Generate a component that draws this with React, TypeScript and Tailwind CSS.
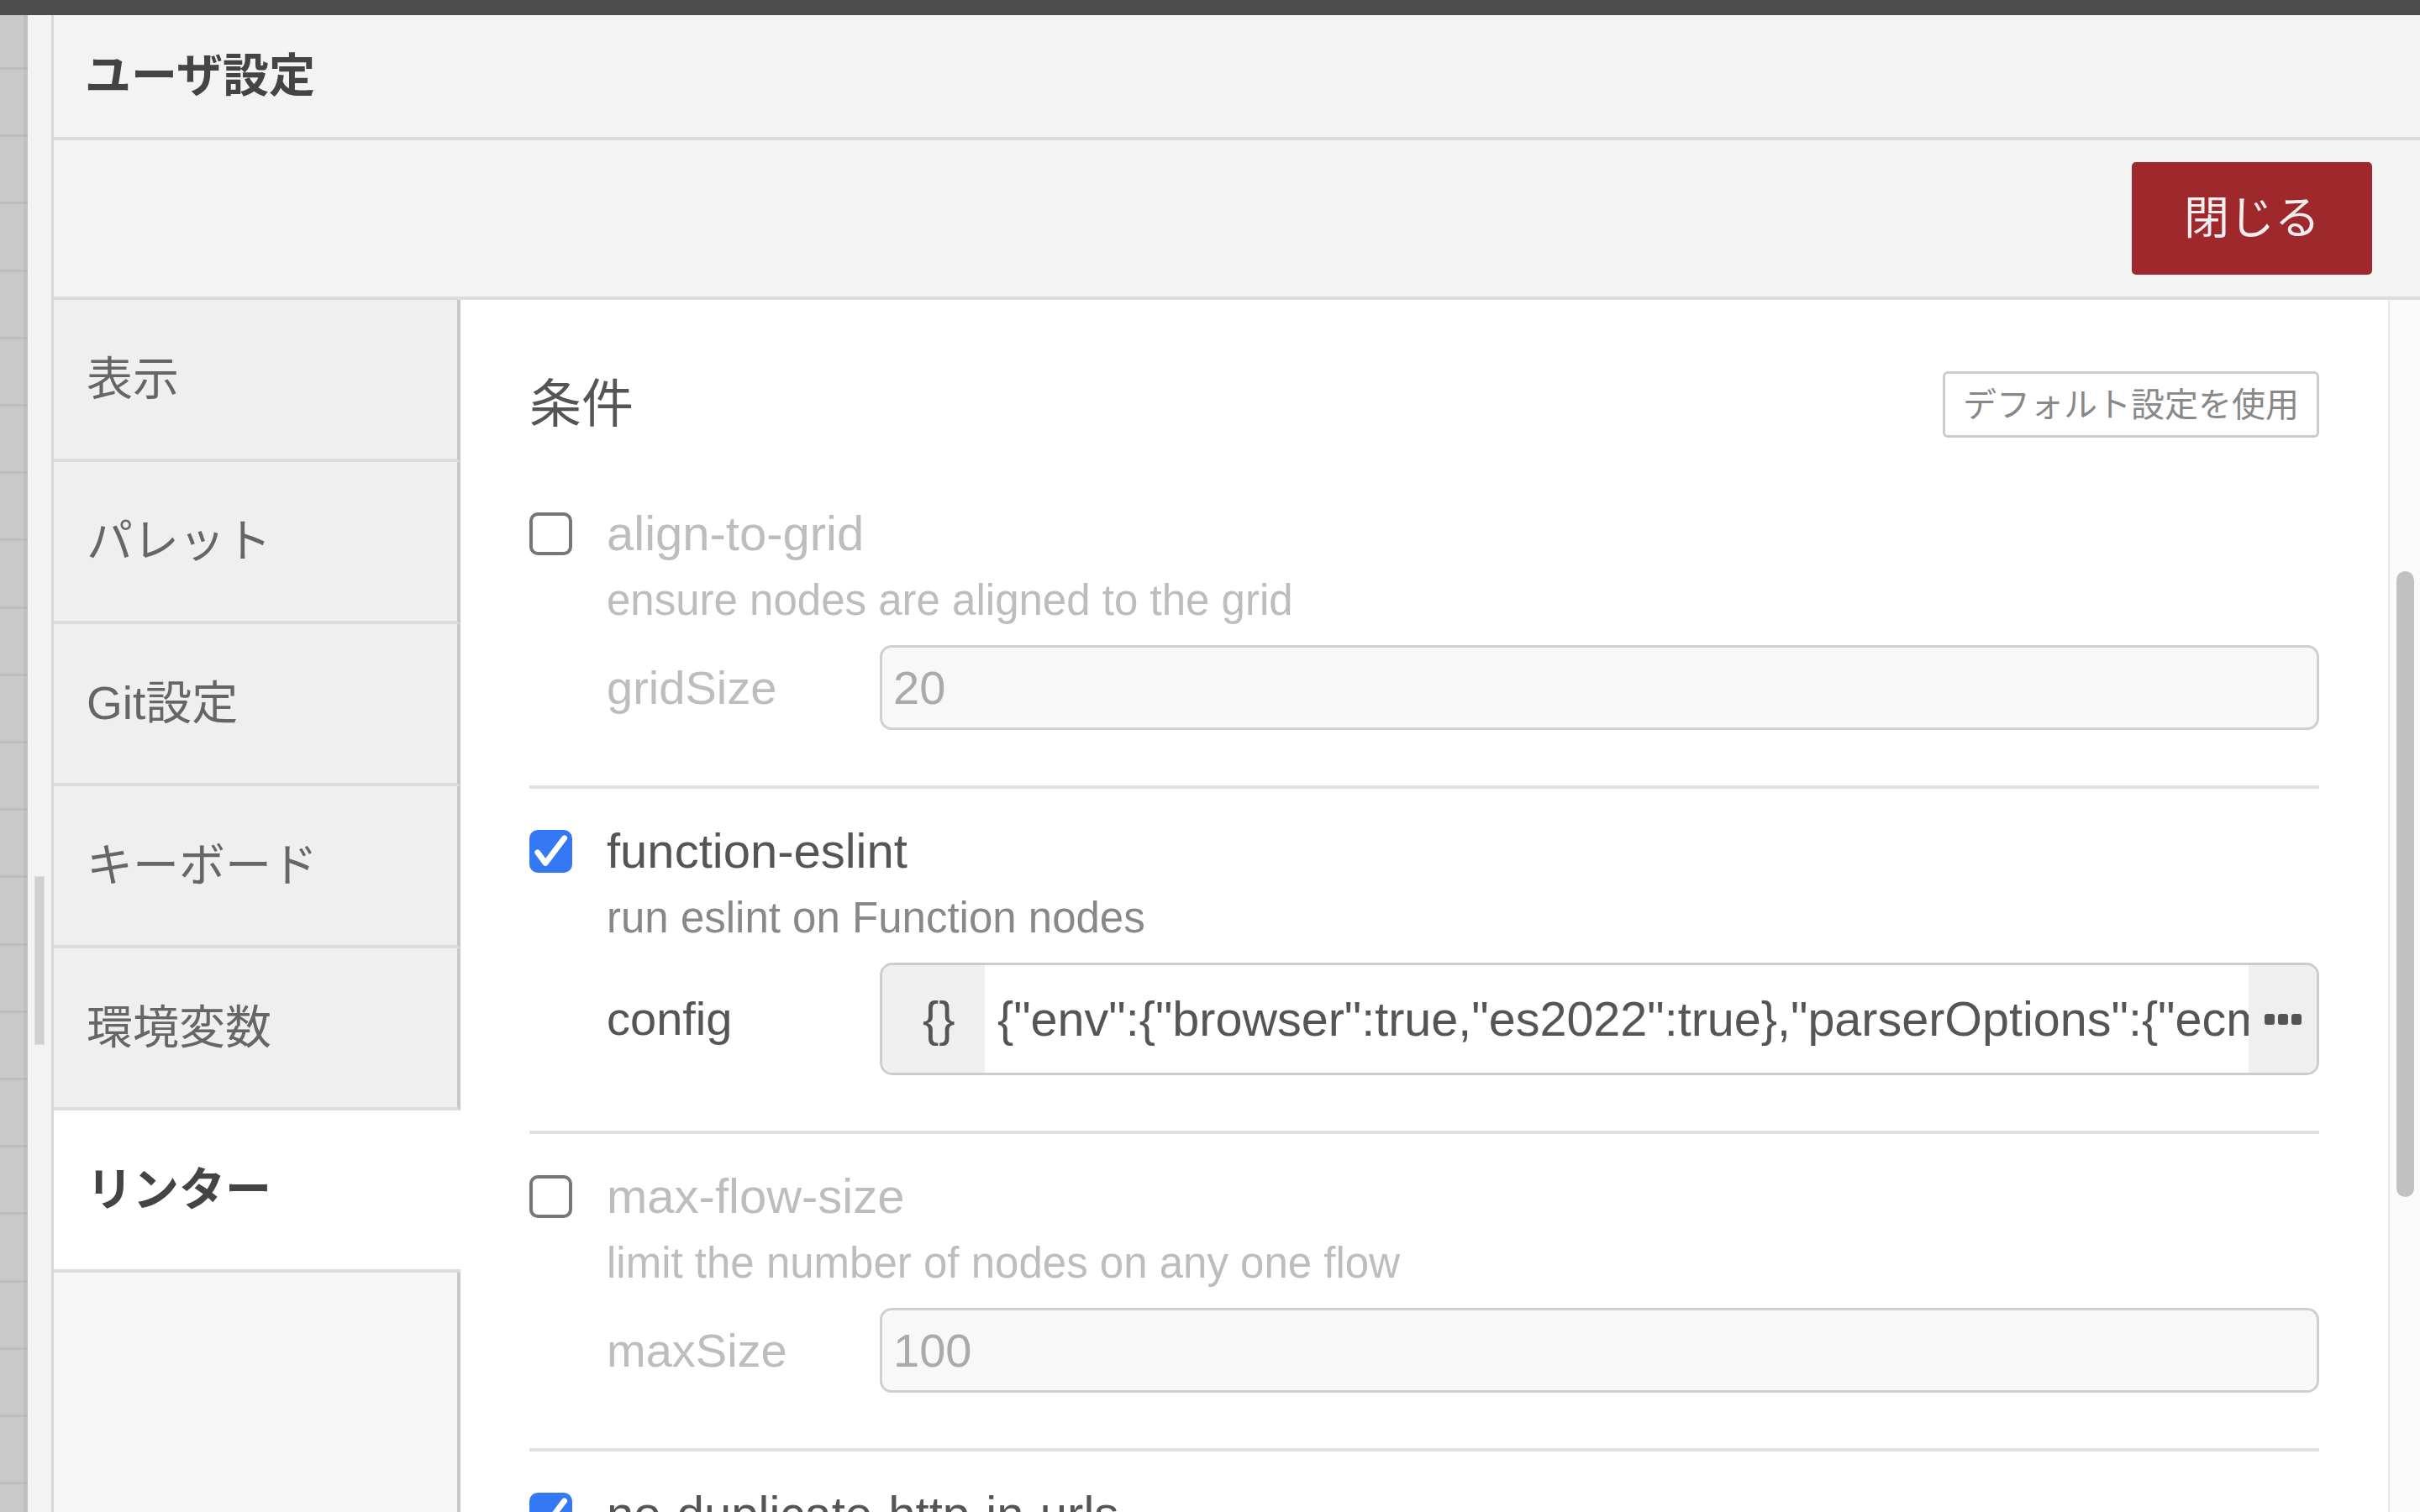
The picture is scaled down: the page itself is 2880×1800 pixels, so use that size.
import React from "react";

function Checkbox({ checked }: { checked: boolean }) {
  if (checked) {
    return (
      <div className="w-[51px] h-[51px] rounded-[10px] bg-[#3478f6] shrink-0 flex items-center justify-center">
        <svg width="51" height="51" viewBox="0 0 24 24">
          <path d="M4.6 12.6 L9 18.6 L19.6 4.6" stroke="#ffffff" strokeWidth="3.2" fill="none" strokeLinecap="round" strokeLinejoin="round" />
        </svg>
      </div>
    );
  }
  return <div className="w-[51px] h-[51px] rounded-[10px] border-[4px] border-[#777777] bg-white shrink-0" />;
}

function Item({
  name,
  desc,
  enabled,
  children,
}: {
  name: string;
  desc: string;
  enabled: boolean;
  children?: React.ReactNode;
}) {
  return (
    <div className="pt-[44px] pb-[66px] border-b-[4px] border-[#e0e0e0]">
      <div className="flex items-center h-[60px] gap-[41px]">
        <Checkbox checked={enabled} />
        <div className={"text-[58px] leading-[60px] whitespace-nowrap " + (enabled ? "text-[#555555]" : "text-[#bdbdbd]")}>{name}</div>
      </div>
      <div className={"mt-[20px] pl-[92px] h-[60px] text-[51px] leading-[60px] whitespace-nowrap " + (enabled ? "text-[#888888]" : "text-[#bdbdbd]")}>
        {desc}
      </div>
      <div className="mt-[23px] pl-[92px]">{children}</div>
    </div>
  );
}

function PlainInput({ label, value }: { label: string; value: string }) {
  return (
    <div className="flex items-center">
      <div className="w-[325px] text-[56px] leading-[60px] text-[#bdbdbd] whitespace-nowrap">{label}</div>
      <div className="flex-1 h-[101px] border-[3px] border-[#d0d0d0] rounded-[14px] bg-[#f8f8f8] flex items-center pl-[13px] text-[56px] text-[#aaaaaa]">
        {value}
      </div>
    </div>
  );
}

const tabs = ["表示", "パレット", "Git設定", "キーボード", "環境変数", "リンター"];

export default function App() {
  return (
    <div className="w-[2880px] h-[1800px] overflow-hidden flex flex-col bg-[#f3f3f3] font-['Liberation_Sans','Noto_Sans_CJK_JP',sans-serif]">
      <div className="h-[18px] bg-[#4d4d4d] shrink-0" />
      <div className="flex-1 min-h-0 flex">
        {/* background page edge */}
        <div className="w-[28px] bg-[repeating-linear-gradient(to_bottom,#c9c9c9_0px,#c9c9c9_62px,#bdbdbd_62px,#bdbdbd_65px,#c9c9c9_65px,#c9c9c9_80.2px)]" />
        <div className="w-[5px] bg-[repeating-linear-gradient(to_bottom,#c0c0c0_0px,#c0c0c0_62px,#b6b6b6_62px,#b6b6b6_65px,#c0c0c0_65px,#c0c0c0_80.2px)]" />
        <div className="w-[28px] bg-[#f3f3f3] pt-[1025px] pl-[8px]">
          <div className="w-[12px] h-[201px] bg-[#cfcfcf] border border-[#dddddd]" />
        </div>
        {/* dialog */}
        <div className="flex-1 min-w-0 flex flex-col border-l-[3px] border-[#d9d9d9]">
          <div className="h-[149px] shrink-0 border-b-[4px] border-[#dcdcdc] bg-[#f3f3f3] flex items-center pl-[37px]">
            <div className="text-[55px] font-bold text-[#444444] leading-none">ユーザ設定</div>
          </div>
          <div className="h-[190px] shrink-0 border-b-[4px] border-[#dcdcdc] bg-[#f3f3f3] flex items-center justify-end pr-[57px]">
            <div className="w-[286px] h-[134px] rounded-[5px] bg-[#9f282d] flex items-center justify-center text-[54px] text-[#eeeeee] leading-none">
              閉じる
            </div>
          </div>
          <div className="flex-1 min-h-0 flex">
            {/* sidebar */}
            <div className="w-[484px] shrink-0 flex flex-col bg-[#f7f7f7]">
              {tabs.map((t, i) => {
                const sel = i === tabs.length - 1;
                return (
                  <div
                    key={t}
                    className={
                      "h-[193px] shrink-0 border-b-[4px] border-b-[#dcdcdc] flex items-center pl-[39px] text-[55px] leading-none " +
                      (sel
                        ? "bg-white font-bold text-[#444444]"
                        : "bg-[#efefef] text-[#666666] border-r-[4px] border-r-[#c8c8c8]")
                    }
                  >
                    {t}
                  </div>
                );
              })}
              <div className="flex-1 border-r-[4px] border-r-[#c8c8c8] bg-[#f7f7f7]" />
            </div>
            {/* content */}
            <div className="flex-1 min-w-0 bg-white px-[82px] pt-[85px] overflow-hidden">
              <div className="flex items-center justify-between h-[79px]">
                <div className="text-[62px] text-[#555555] leading-none">条件</div>
                <div className="w-[448px] h-[79px] border-[3px] border-[#cccccc] rounded-[6px] bg-white flex items-center justify-center text-[40px] text-[#888888] leading-none">
                  デフォルト設定を使用
                </div>
              </div>
              <div className="h-[40px]" />
              <div>
                <Item name="align-to-grid" desc="ensure nodes are aligned to the grid" enabled={false}>
                  <PlainInput label="gridSize" value="20" />
                </Item>
                <Item name="function-eslint" desc="run eslint on Function nodes" enabled={true}>
                  <div className="flex items-center">
                    <div className="w-[325px] text-[56px] leading-[60px] text-[#555555] whitespace-nowrap">config</div>
                    <div className="flex-1 min-w-0 h-[134px] border-[3px] border-[#cccccc] rounded-[15px] overflow-hidden flex">
                      <div className="w-[122px] shrink-0 bg-[#efefef] flex items-center pl-[48px] text-[58px] text-[#555555] leading-none">
                        {"{}"}
                      </div>
                      <div className="flex-1 min-w-0 overflow-hidden whitespace-nowrap flex items-center pl-[15px] text-[57.5px] text-[#555555] bg-white">
                        {'{"env":{"browser":true,"es2022":true},"parserOptions":{"ecmaVersion":"latest"},"rules":{"no-unused-vars":"warn"}}'}
                      </div>
                      <div className="w-[81px] shrink-0 bg-[#efefef] flex items-center justify-center gap-[4px]">
                        <div className="w-[12px] h-[13px] rounded-[3px] bg-[#555555]" />
                        <div className="w-[12px] h-[13px] rounded-[3px] bg-[#555555]" />
                        <div className="w-[12px] h-[13px] rounded-[3px] bg-[#555555]" />
                      </div>
                    </div>
                  </div>
                </Item>
                <Item name="max-flow-size" desc="limit the number of nodes on any one flow" enabled={false}>
                  <PlainInput label="maxSize" value="100" />
                </Item>
                <div className="pt-[44px]">
                  <div className="flex items-center h-[60px] gap-[41px]">
                    <Checkbox checked={true} />
                    <div className="text-[58px] leading-[60px] whitespace-nowrap text-[#555555]">no-duplicate-http-in-urls</div>
                  </div>
                </div>
              </div>
            </div>
            {/* scrollbar */}
            <div className="w-[38px] shrink-0 bg-[#fafafa] border-l-[2px] border-[#e8e8e8] pt-[323px] pl-[8px]">
              <div className="w-[21px] h-[745px] rounded-full bg-[#c1c1c1]" />
            </div>
          </div>
        </div>
      </div>
    </div>
  );
}
